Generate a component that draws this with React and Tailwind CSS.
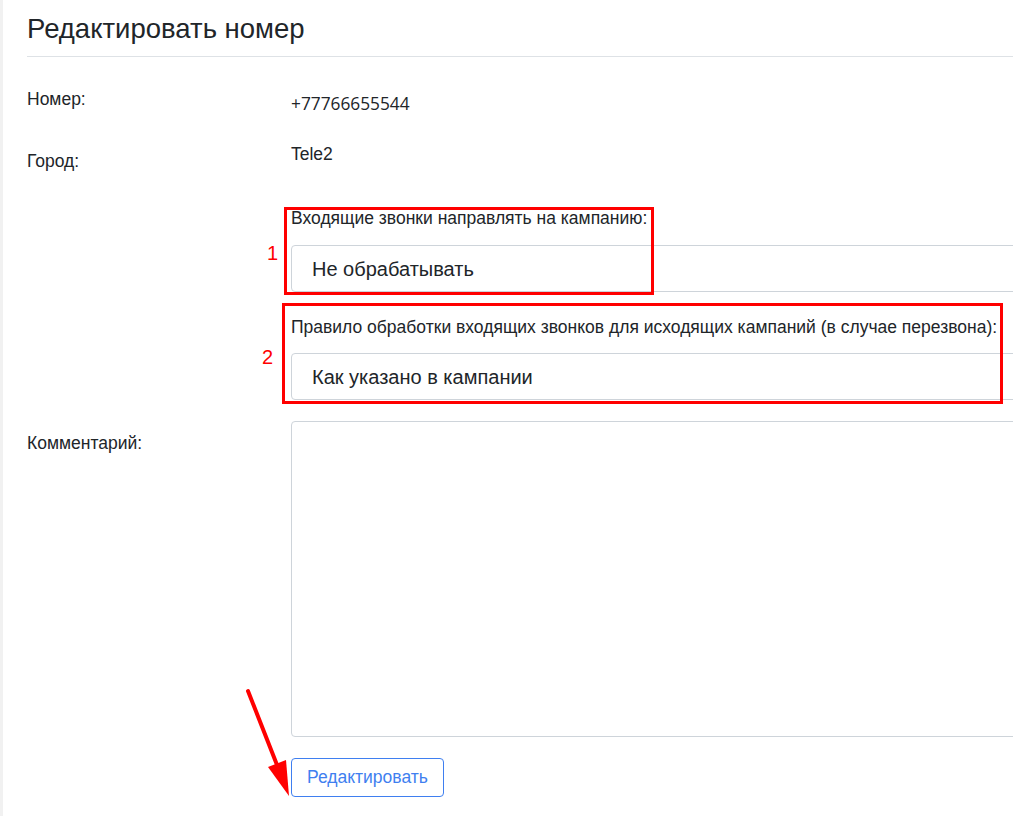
import React from "react";

const SelectBox = ({ value, className = "" }) => (
  <div
    className={`flex h-[47px] w-[800px] items-center rounded-[4px] border border-[#ced4da] bg-white pl-[20px] text-[20px] ${className}`}
  >
    {value}
  </div>
);

export default function App() {
  return (
    <div className="relative h-[816px] w-[1013px] overflow-hidden border-l-[3px] border-[#f1f1f1] bg-white pl-[24px] font-['Liberation_Sans',Arial,sans-serif] text-[#212529]">
      <div className="w-[1100px]">
        <h1 className="border-b border-[#dee2e6] pb-[10px] pt-[12px] text-[27.5px] font-normal leading-[34px]">
          Редактировать номер
        </h1>

        <div className="flex h-[73px]">
          <div className="w-[264px] pt-[30px] text-[17.5px] leading-6">Номер:</div>
          <div className="pt-[35px] font-['Open_Sans',sans-serif] text-[17.3px] leading-6">
            +77766655544
          </div>
        </div>

        <div className="flex h-[76px]">
          <div className="w-[264px] pt-[19px] text-[17.5px] leading-6">Город:</div>
          <div className="pt-[12px] text-[17.5px] leading-6">Tele2</div>
        </div>

        <div className="ml-[264px] w-[800px]">
          <div className="text-[17.5px] leading-6">Входящие звонки направлять на кампанию:</div>
          <SelectBox value="Не обрабатывать" className="mt-[15px]" />
          <div className="mt-[23px] text-[17.5px] leading-6">
            Правило обработки входящих звонков для исходящих кампаний (в случае перезвона):
          </div>
          <SelectBox value="Как указано в кампании" className="mt-[14px]" />
        </div>

        <div className="mt-[21px] flex">
          <div className="w-[264px] pt-[10px] text-[17.5px] leading-6">Комментарий:</div>
          <textarea className="h-[316px] w-[800px] resize-none rounded-[4px] border border-[#ced4da] bg-white" />
        </div>

        <button className="ml-[264px] mt-[21px] h-[39px] rounded-[4px] border border-[#3f7ff0] px-[15px] text-[17.5px] text-[#3f7ff0]">
          Редактировать
        </button>
      </div>

      {/* annotations */}
      <div className="absolute left-[281px] top-[207px] h-[88px] w-[370px] border-[3px] border-[#ff0000]" />
      <div className="absolute left-[279px] top-[303px] h-[101px] w-[721px] border-[3px] border-[#ff0000]" />
      <div className="absolute left-[264px] top-[241px] text-[20px] leading-6 text-[#ff0000]">1</div>
      <div className="absolute left-[259px] top-[345px] text-[20px] leading-6 text-[#ff0000]">2</div>
      <svg className="absolute left-[-3px] top-0" width="1013" height="816" viewBox="0 0 1013 816">
        <line x1="248" y1="691" x2="279" y2="770" stroke="#ff0000" strokeWidth="4" strokeLinecap="round" />
        <polygon points="289,796 268,767 286,760" fill="#ff0000" />
      </svg>
    </div>
  );
}
